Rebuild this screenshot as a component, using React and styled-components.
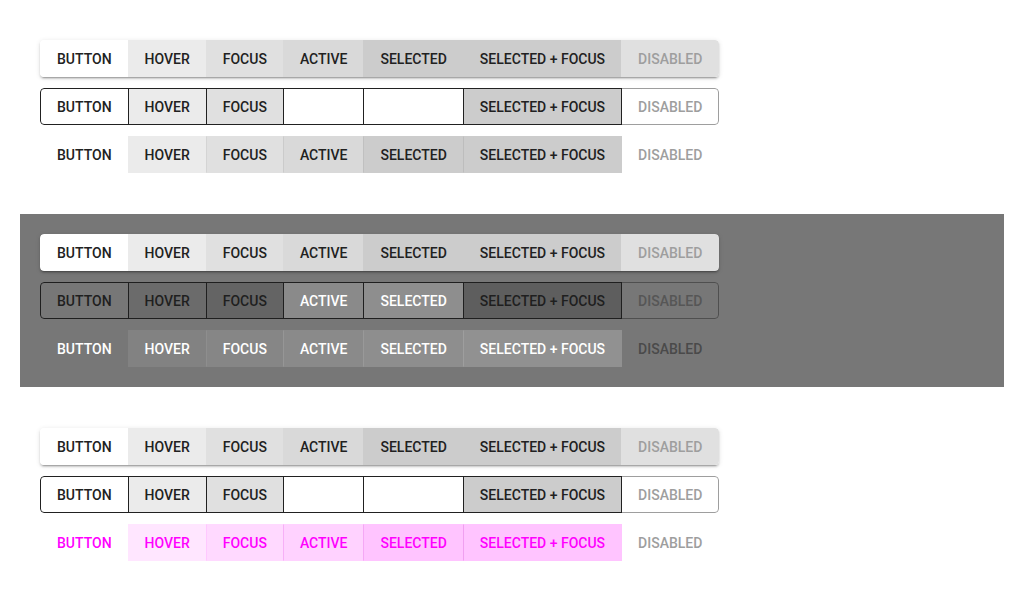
import React from 'react';
import styled, { createGlobalStyle } from 'styled-components';

const GlobalStyle = createGlobalStyle`
    body {
        margin: 0;
        background: #ffffff;
        font-family: Roboto, "Liberation Sans", sans-serif;
    }
`;

const Page = styled.div`
    padding: 20px;
    display: flex;
    flex-direction: column;
    gap: 21px;
`;

const Section = styled.div`
    padding: 20px;
    display: flex;
    flex-direction: column;
    gap: 11px;
    background: ${props => props.$dark ? '#777777' : 'transparent'};
`;

const Group = styled.div`
    display: flex;
    align-self: flex-start;
    height: 37px;
    border-radius: 4px;
    overflow: hidden;
    box-shadow: ${props => props.$raised
        ? '0 3px 1px -2px rgba(0,0,0,.2), 0 2px 2px 0 rgba(0,0,0,.14), 0 1px 5px 0 rgba(0,0,0,.12)'
        : 'none'};
`;

const Btn = styled.button`
    box-sizing: border-box;
    height: 100%;
    padding: 0 16px;
    margin: 0 0 0 -1px;
    display: flex;
    align-items: center;
    justify-content: center;
    font-family: Roboto, "Liberation Sans", sans-serif;
    font-weight: 500;
    font-size: 14px;
    text-transform: uppercase;
    letter-spacing: 0;
    cursor: pointer;
    background: ${props => props.$bg || 'transparent'};
    color: ${props => props.$fg};
    border: 1px solid ${props => props.$border || 'transparent'};
    border-left-color: ${props => props.$border || props.$sep || 'transparent'};
    position: relative;
    z-index: ${props => props.$top ? 1 : 0};
    &:first-child {
        margin-left: 0;
        border-radius: 4px 0 0 4px;
    }
    &:last-child {
        border-radius: 0 4px 4px 0;
    }
`;

const LABELS = ['Button', 'Hover', 'Focus', 'Active', 'Selected', 'Selected + Focus', 'Disabled'];

// one entry per button: [background, text colour, border, on top, separator]
const ROWS = {
    lightContained: {
        raised: true,
        cells: [
            ['#ffffff', '#212121'],
            ['#ebebeb', '#212121'],
            ['#e0e0e0', '#212121'],
            ['#d9d9d9', '#212121'],
            ['#cccccc', '#212121'],
            ['#cccccc', '#212121'],
            ['#e0e0e0', '#9e9e9e'],
        ],
    },
    lightOutlined: {
        cells: [
            ['#ffffff', '#212121', '#212121'],
            ['#ebebeb', '#212121', '#212121'],
            ['#e0e0e0', '#212121', '#212121'],
            ['#ffffff', '#ffffff', '#212121'],
            ['#ffffff', '#ffffff', '#212121'],
            ['#cccccc', '#212121', '#212121', true],
            ['#ffffff', '#9e9e9e', '#9e9e9e'],
        ],
    },
    lightText: {
        cells: [
            [null, '#212121'],
            ['#ebebeb', '#212121'],
            ['#e0e0e0', '#212121', null, false, '#d4d4d4'],
            ['#d9d9d9', '#212121', null, false, '#cbcbcb'],
            ['#cccccc', '#212121', null, false, '#c0c0c0'],
            ['#cccccc', '#212121', null, false, '#bdbdbd'],
            [null, '#9e9e9e'],
        ],
    },
    darkOutlined: {
        cells: [
            [null, '#1f1f1f', '#1f1f1f'],
            ['#6b6b6b', '#1f1f1f', '#1f1f1f'],
            ['#646464', '#1f1f1f', '#1f1f1f'],
            ['#8a8a8a', '#ffffff', '#1f1f1f'],
            ['#8e8e8e', '#ffffff', '#1f1f1f'],
            ['#5e5e5e', '#1f1f1f', '#1f1f1f', true],
            [null, '#565656', '#4f4f4f'],
        ],
    },
    darkText: {
        cells: [
            [null, '#ffffff'],
            ['#828282', '#ffffff'],
            ['#868686', '#ffffff', null, false, '#8e8e8e'],
            ['#8a8a8a', '#ffffff', null, false, '#969696'],
            ['#8e8e8e', '#ffffff', null, false, '#999999'],
            ['#919191', '#ffffff', null, false, '#9e9e9e'],
            [null, '#4a4a4a'],
        ],
    },
    pinkText: {
        cells: [
            [null, '#ff00ff'],
            ['#ffe6ff', '#ff00ff'],
            ['#ffd9ff', '#ff00ff', null, false, '#ffc8ff'],
            ['#ffd2ff', '#ff00ff', null, false, '#f7b0f7'],
            ['#ffc4ff', '#ff00ff', null, false, '#f5a8f5'],
            ['#ffc4ff', '#ff00ff', null, false, '#f0a0f0'],
            [null, '#9e9e9e'],
        ],
    },
};

const ButtonRow = ({ row }) => {
    const conf = ROWS[row];
    return (
        <Group $raised={conf.raised}>
            {conf.cells.map(([bg, fg, border, top, sep], i) => (
                <Btn
                    key={LABELS[i]}
                    $bg={bg}
                    $fg={fg}
                    $border={border}
                    $top={top}
                    $sep={sep}
                >
                    {LABELS[i]}
                </Btn>
            ))}
        </Group>
    );
};

const App = () => {
    return (
        <>
            <GlobalStyle />
            <Page>
                <Section>
                    <ButtonRow row="lightContained" />
                    <ButtonRow row="lightOutlined" />
                    <ButtonRow row="lightText" />
                </Section>
                <Section $dark>
                    <ButtonRow row="lightContained" />
                    <ButtonRow row="darkOutlined" />
                    <ButtonRow row="darkText" />
                </Section>
                <Section>
                    <ButtonRow row="lightContained" />
                    <ButtonRow row="lightOutlined" />
                    <ButtonRow row="pinkText" />
                </Section>
            </Page>
        </>
    );
};

export default App;
